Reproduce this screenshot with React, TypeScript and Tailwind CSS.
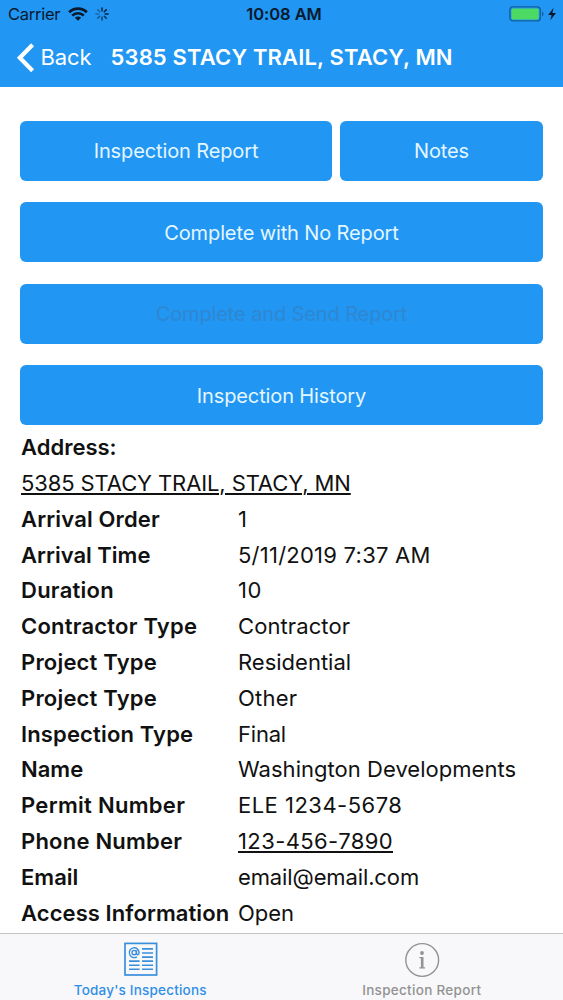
import React from 'react';

type Row = { label: string; value: string; link?: boolean; labelClass: string; valueClass: string };

const rows: Row[] = [
  { label: 'Arrival Order', value: '1', labelClass: 'tracking-[0.15px]', valueClass: '' },
  { label: 'Arrival Time', value: '5/11/2019 7:37 AM', labelClass: '', valueClass: 'tracking-[0.24px]' },
  { label: 'Duration', value: '10', labelClass: 'tracking-[0.25px]', valueClass: 'tracking-[0.5px]' },
  { label: 'Contractor Type', value: 'Contractor', labelClass: 'tracking-[0.22px]', valueClass: 'tracking-[0.1px]' },
  { label: 'Project Type', value: 'Residential', labelClass: 'tracking-[0.2px]', valueClass: '' },
  { label: 'Project Type', value: 'Other', labelClass: 'tracking-[0.2px]', valueClass: 'tracking-[0.2px]' },
  { label: 'Inspection Type', value: 'Final', labelClass: 'tracking-[0.15px]', valueClass: 'tracking-[-0.2px]' },
  { label: 'Name', value: 'Washington Developments', labelClass: '', valueClass: 'tracking-[0.03px]' },
  { label: 'Permit Number', value: 'ELE 1234-5678', labelClass: 'tracking-[0.3px]', valueClass: 'tracking-[0.48px]' },
  { label: 'Phone Number', value: '123-456-7890', link: true, labelClass: 'tracking-[0.22px]', valueClass: 'tracking-[0.4px]' },
  { label: 'Email', value: 'email@email.com', labelClass: '', valueClass: 'tracking-[-0.12px]' },
  { label: 'Access Information', value: 'Open', labelClass: 'tracking-[0.08px]', valueClass: '' },
];

const spokes = [
  { angle: 0, opacity: 0.9 },
  { angle: 45, opacity: 1 },
  { angle: 90, opacity: 0.9 },
  { angle: 135, opacity: 0.8 },
  { angle: 180, opacity: 0.65 },
  { angle: 225, opacity: 0.5 },
  { angle: 270, opacity: 0.35 },
  { angle: 315, opacity: 0.4 },
];

function WifiIcon() {
  return (
    <svg className="ml-[8px] h-[14px] w-[20px]" viewBox="0 0 20 14" fill="none" stroke="#07192b">
      <path d="M1.2 5.2 A12.6 12.6 0 0 1 18.8 5.2" strokeWidth="2.9" />
      <path d="M4.2 8.6 A8.3 8.3 0 0 1 15.8 8.6" strokeWidth="2.6" />
      <path d="M10 13.8 L6.9 10.7 A4.4 4.4 0 0 1 13.1 10.7 Z" fill="#07192b" stroke="none" />
    </svg>
  );
}

function Spinner() {
  return (
    <svg className="ml-[7px] h-[14px] w-[14px]" viewBox="-7 -7 14 14">
      {spokes.map((s) => (
        <line
          key={s.angle}
          x1="0"
          y1="-3.2"
          x2="0"
          y2="-6.1"
          stroke="#07192b"
          strokeWidth="1.5"
          strokeLinecap="round"
          opacity={s.opacity}
          transform={`rotate(${s.angle})`}
        />
      ))}
    </svg>
  );
}

function Battery() {
  return (
    <svg className="h-[18px] w-[50px]" viewBox="0 0 50 18">
      <rect x="0.9" y="1.9" width="30.4" height="14" rx="3.2" fill="none" stroke="#12609f" strokeWidth="1.4" />
      <rect x="2.4" y="3.4" width="27.4" height="11" rx="1.6" fill="#4cd964" />
      <path d="M33 6.6 C35 7.2 35 10.6 33 11.2 Z" fill="#12609f" />
      <path d="M44.6 2.8 L39.2 9.9 H42.6 L41.3 15.2 L47 7.9 H43.4 Z" fill="#07192b" />
    </svg>
  );
}

function NewsIcon() {
  return (
    <svg className="h-[34px] w-[34px]" viewBox="0 0 34 34" fill="none" stroke="#3a8fdd">
      <rect x="1" y="1.4" width="31.6" height="31.6" strokeWidth="1.7" />
      <g strokeWidth="1.6">
        <path d="M18 6.9H29M18 11H29M18 15.1H29M18 19.1H29M18 23.2H29M18 27.3H29" />
        <path d="M5 19.1H15.6M5 23.2H15.6M5 27.3H15.6" />
      </g>
      <circle cx="10.2" cy="10.6" r="2.2" strokeWidth="1.4" />
      <path d="M12.5 8.2v3.4c0 1.8 2.6 1.6 2.6-1a4.9 4.9 0 1 0-2.2 4.2" strokeWidth="1.4" />
    </svg>
  );
}

function InfoIcon() {
  return (
    <svg className="h-[36px] w-[36px]" viewBox="0 0 36 36" fill="none">
      <circle cx="18.2" cy="18" r="16.4" stroke="#929292" strokeWidth="1.4" />
      <circle cx="18" cy="11" r="1.9" fill="#929292" />
      <path d="M15.4 15.1H19.5V25.2H21V26.5H15.4V25.2H16.9V16.3H15.4Z" fill="#929292" />
    </svg>
  );
}

function Button({ label, className = '', textClass = '' }: { label: string; className?: string; textClass?: string }) {
  return (
    <button
      className={`flex h-[60px] items-center justify-center rounded-[6px] bg-[#2196f3] pt-[0.8px] text-[20px] tracking-[-0.12px] ${className}`}
    >
      <span className={`whitespace-nowrap ${textClass}`}>{label}</span>
    </button>
  );
}

export default function App() {
  return (
    <div className="flex h-[1000px] w-[563px] flex-col overflow-hidden bg-white font-['Inter','Liberation_Sans',sans-serif] text-[#111]">
      <header className="h-[87px] shrink-0 bg-[#2196f3]">
        <div className="grid h-[28px] grid-cols-[1fr_auto_1fr] items-center pl-[8px] pr-[4px] text-[#07192b]">
          <div className="flex items-center">
            <span className="w-[52px] whitespace-nowrap text-[16.5px] tracking-[-0.25px]">Carrier</span>
            <WifiIcon />
            <Spinner />
          </div>
          <span className="pl-[1px] text-[16.5px] font-semibold tracking-[-0.05px]">10:08 AM</span>
          <div className="flex justify-end">
            <Battery />
          </div>
        </div>
        <div className="flex h-[59px] items-center pl-[16px] text-white">
          <svg className="h-[30px] w-[20px]" viewBox="0 0 20 30" fill="none" stroke="white" strokeWidth="4.2">
            <path d="M16.6 1.8 L3.8 14.8 L16.6 27.8" />
          </svg>
          <span className="ml-[4.5px] w-[70px] whitespace-nowrap text-[22px] tracking-[-0.1px]">Back</span>
          <h1 className="whitespace-nowrap text-[22px] font-semibold tracking-[0.15px]">5385 STACY TRAIL, STACY, MN</h1>
        </div>
      </header>

      <main className="flex min-h-0 flex-1 flex-col pl-[20px] pr-[20px] pt-[33.7px]">
        <div className="flex flex-col gap-[21.5px] text-[#e4f6ff]">
          <div className="flex gap-[8px]">
            <Button label="Inspection Report" className="w-[312px]" />
            <Button label="Notes" className="flex-1" />
          </div>
          <Button label="Complete with No Report" />
          <Button label="Complete and Send Report" textClass="text-[#2f87d0]" />
          <Button label="Inspection History" />
        </div>

        <dl className="mt-[4px] text-[22px]">
          <div className="h-[35.8px] leading-[36px] pl-[1px]">
            <dt className="font-semibold">Address:</dt>
          </div>
          <div className="h-[35.8px] leading-[36px] pl-[1px]">
            <dd className="whitespace-nowrap tracking-[-0.11px]">
              <a className="underline decoration-[1.5px] underline-offset-[2px]">5385 STACY TRAIL, STACY, MN</a>
            </dd>
          </div>
          {rows.map((row, i) => (
            <div key={i} className="flex h-[35.8px] pl-[1px] leading-[36px]">
              <dt className={`w-[217px] shrink-0 whitespace-nowrap font-semibold ${row.labelClass}`}>{row.label}</dt>
              <dd className={`whitespace-nowrap ${row.valueClass}`}>
                {row.link ? (
                  <a className="underline decoration-[1.5px] underline-offset-[2px]">{row.value}</a>
                ) : (
                  row.value
                )}
              </dd>
            </div>
          ))}
        </dl>
      </main>

      <nav className="grid h-[67px] shrink-0 grid-cols-2 border-t border-[#c4c4c6] bg-[#f8f8fa] text-[13.5px] font-medium">
        <div className="flex flex-col items-center pt-[8px] text-[#2f8fe6]">
          <NewsIcon />
          <span className="mt-[4px] -ml-[1px] tracking-[0.2px]">Today&apos;s Inspections</span>
        </div>
        <div className="flex flex-col items-center pt-[8px] text-[#929292]">
          <InfoIcon />
          <span className="mt-[2px] -ml-[1px] tracking-[0.3px]">Inspection Report</span>
        </div>
      </nav>
    </div>
  );
}
